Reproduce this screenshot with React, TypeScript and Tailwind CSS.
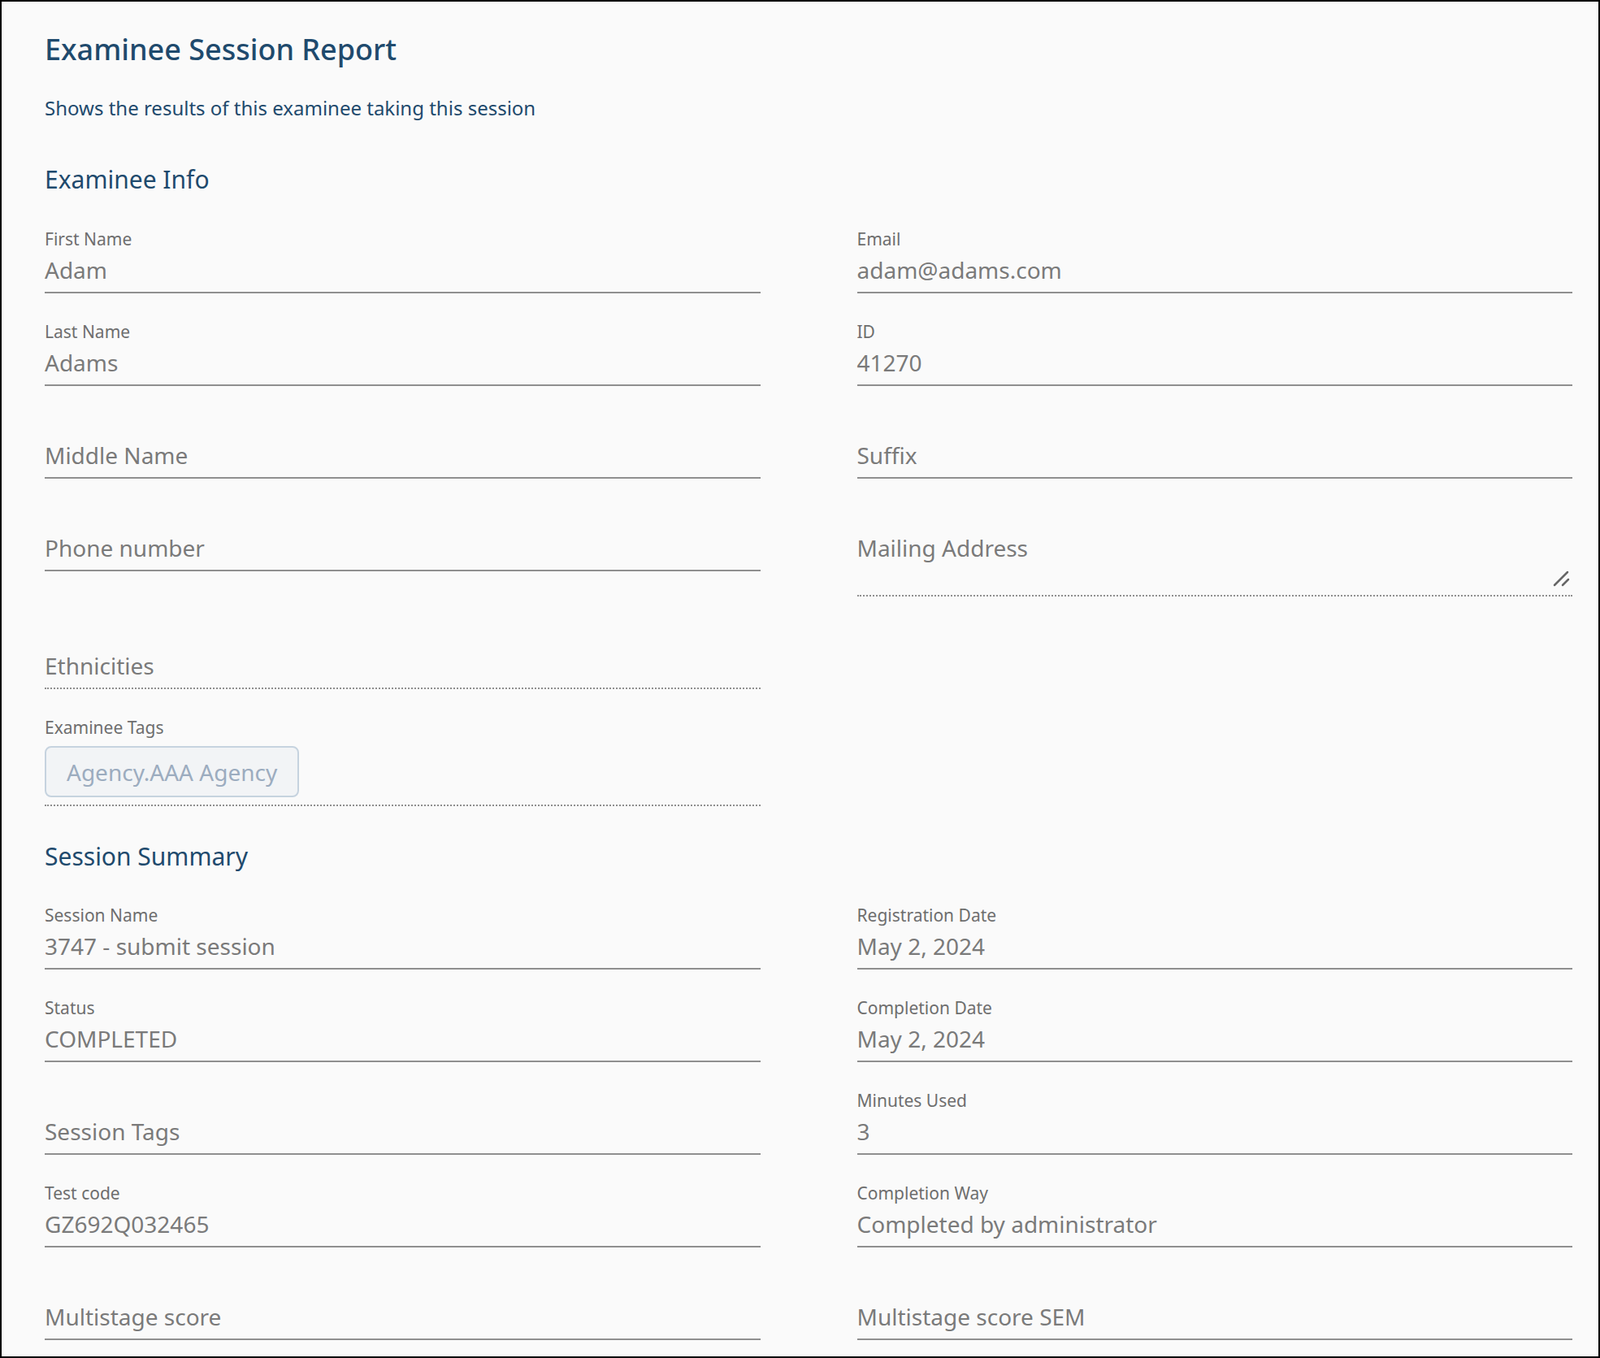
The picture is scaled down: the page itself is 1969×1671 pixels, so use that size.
import React from "react";

const F = "font-['Roboto',sans-serif]";

function Field({ label, value, placeholder, dotted, tall, children }: { label?: string; value?: string; placeholder?: string; dotted?: boolean; tall?: boolean; children?: React.ReactNode }) {
  return (
    <div className={`relative flex flex-col ${dotted ? "border-b-2 border-dotted border-[#8f8f8f]" : "border-b-2 border-[#8f8f8f]"} ${tall ? "pb-[38px]" : "pb-[7px]"}`}>
      <div className="h-[26px] leading-[26px] text-[21px] text-[#6e6e6e]">{label ?? ""}</div>
      <div className="mt-[5px] h-[40px] leading-[40px] text-[28px] text-[#7a7a7a]">{value ?? placeholder ?? ""}</div>
      {children}
    </div>
  );
}

export default function App() {
  return (
    <div className={`${F} w-[1969px] h-[1671px] overflow-hidden border-2 border-black bg-[#fafafa] pl-[53px] pr-[32px] pt-[37px]`}>
      <h1 className="text-[36px] leading-[44px] font-medium text-[#1f4a6d]">Examinee Session Report</h1>
      <p className="mt-[34px] text-[24px] leading-[32px] text-[#1f4a6d]">Shows the results of this examinee taking this session</p>

      <h2 className="mt-[54px] text-[30px] leading-[36px] text-[#1f4a6d]">Examinee Info</h2>
      <div className="mt-[42px] grid grid-cols-2 gap-x-[119px] gap-y-[34px]">
        <Field label="First Name" value="Adam" />
        <Field label="Email" value="adam@adams.com" />
        <Field label="Last Name" value="Adams" />
        <Field label="ID" value="41270" />
        <Field placeholder="Middle Name" />
        <Field placeholder="Suffix" />
        <div className="self-start"><Field placeholder="Phone number" /></div>
        <Field placeholder="Mailing Address" dotted tall>
          <svg className="absolute right-[2px] bottom-[10px]" width="22" height="20" viewBox="0 0 22 20">
            <line x1="2" y1="18" x2="18" y2="2" stroke="#666" strokeWidth="2.5" strokeLinecap="round" />
            <line x1="12" y1="18" x2="19" y2="11" stroke="#666" strokeWidth="2.5" strokeLinecap="round" />
          </svg>
        </Field>
        <Field placeholder="Ethnicities" dotted />
        <div />
        <div className="flex flex-col border-b-2 border-dotted border-[#8f8f8f] pb-[9px]">
          <div className="h-[26px] leading-[26px] text-[21px] text-[#6e6e6e]">Examinee Tags</div>
          <div className="mt-[10px] self-start h-[63px] px-[25px] flex items-center rounded-[8px] border-2 border-[#c6d3df] bg-[#f2f4f6] text-[28px] text-[#9cacbf]">Agency.AAA Agency</div>
        </div>
        <div />
      </div>

      <h2 className="mt-[44px] text-[30px] leading-[36px] text-[#1f4a6d]">Session Summary</h2>
      <div className="mt-[41px] grid grid-cols-2 gap-x-[119px] gap-y-[34px]">
        <Field label="Session Name" value="3747 - submit session" />
        <Field label="Registration Date" value="May 2, 2024" />
        <Field label="Status" value="COMPLETED" />
        <Field label="Completion Date" value="May 2, 2024" />
        <Field placeholder="Session Tags" />
        <Field label="Minutes Used" value="3" />
        <Field label="Test code" value="GZ692Q032465" />
        <Field label="Completion Way" value="Completed by administrator" />
        <Field placeholder="Multistage score" />
        <Field placeholder="Multistage score SEM" />
      </div>
    </div>
  );
}
